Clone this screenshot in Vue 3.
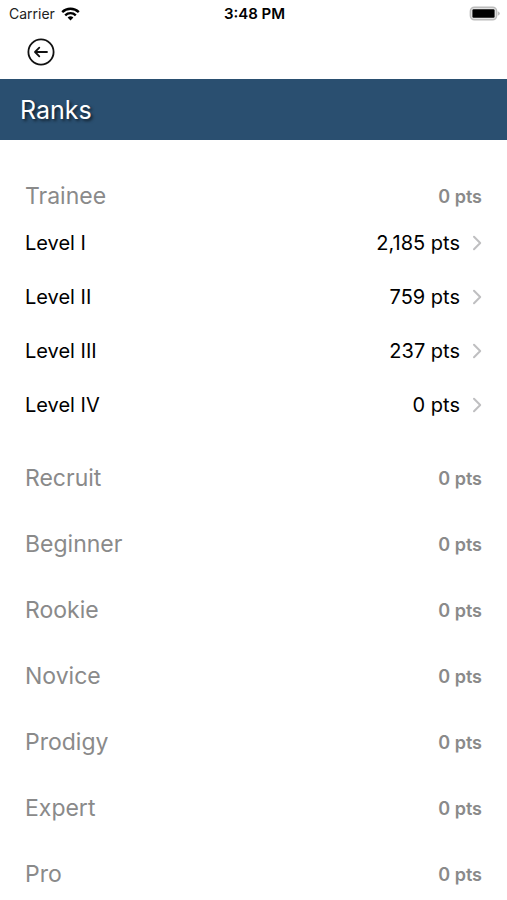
<script setup>
const levels = [
  { name: 'Level I', points: '2,185 pts' },
  { name: 'Level II', points: '759 pts' },
  { name: 'Level III', points: '237 pts' },
  { name: 'Level IV', points: '0 pts' },
]
const ranks = [
  { name: 'Trainee', points: '0 pts', levels },
  ...['Recruit', 'Beginner', 'Rookie', 'Novice', 'Prodigy', 'Expert', 'Pro'].map((name) => ({
    name,
    points: '0 pts',
    levels: [],
  })),
]
</script>

<template>
  <div class="screen">
    <div class="status">
      <div class="carrier">
        <span>Carrier</span>
        <svg width="19" height="14" viewBox="0 0 19 14" aria-hidden="true">
          <g fill="none" stroke="#000" stroke-width="2.4">
            <path d="M1.2 5.1a11.9 11.9 0 0 1 16.6 0" />
            <path d="M4.2 8.3a7.6 7.6 0 0 1 10.6 0" />
          </g>
          <path d="M6.6 10.6a4.2 4.2 0 0 1 5.8 0L9.5 13.5z" />
        </svg>
      </div>
      <span class="time">3:48 PM</span>
      <svg class="battery" width="31" height="15" viewBox="0 0 31 15" aria-hidden="true">
        <rect x="1.4" y="1.2" width="26.2" height="12.6" rx="4" fill="#e4e4e4" stroke="#bcbcbc" stroke-width="1.5" />
        <rect x="3.4" y="3.2" width="22.2" height="8.6" rx="1.2" />
        <path d="M28.8 5.3q2 .7 2 2.2t-2 2.2z" fill="#bcbcbc" />
      </svg>
    </div>
    <nav class="nav">
      <button class="back" type="button" aria-label="Back">
        <svg width="28" height="28" viewBox="0 0 28 28" fill="none" stroke="#111" stroke-width="1.8" aria-hidden="true">
          <circle cx="14" cy="14" r="12.6" />
          <path d="M20 14H8.5M12.3 9.7 8 14l4.3 4.3" stroke-linecap="round" stroke-linejoin="round" />
        </svg>
      </button>
    </nav>
    <h1 class="title">Ranks</h1>
    <main class="list">
      <section v-for="rank in ranks" :key="rank.name" class="rank">
        <div class="rank-head">
          <h2>{{ rank.name }}</h2>
          <span>{{ rank.points }}</span>
        </div>
        <ul v-if="rank.levels.length" class="levels">
          <li v-for="level in rank.levels" :key="level.name">
            <button class="level" type="button">
              <span>{{ level.name }}</span>
              <span class="points">{{ level.points }}</span>
              <svg width="10" height="16" viewBox="0 0 10 16" fill="none" stroke="#bfbfc1" stroke-width="2" aria-hidden="true">
                <path d="M2 1.8 8.2 8 2 14.2" stroke-linecap="round" stroke-linejoin="round" />
              </svg>
            </button>
          </li>
        </ul>
      </section>
    </main>
  </div>
</template>

<style>
body {
  margin: 0;
  background: #fff;
}
</style>

<style scoped>
.screen {
  font-family: Inter, "Liberation Sans", sans-serif;
  color: #000;
}
.status {
  display: grid;
  grid-template-columns: 1fr auto 1fr;
  align-items: center;
  height: 27px;
  padding: 0 7px 0 9px;
  font-size: 14px;
}
.carrier {
  display: flex;
  align-items: center;
  gap: 6px;
  color: #222;
}
.time {
  font-size: 15px;
  font-weight: 600;
}
.battery {
  justify-self: end;
}
.nav {
  display: flex;
  align-items: center;
  height: 50px;
  padding: 0 27px 2px;
}
.back {
  display: flex;
  padding: 0;
  border: 0;
  background: none;
}
.title {
  margin: 0;
  padding: 2px 20px 0;
  background: #2a4f70;
  color: #fff;
  font-size: 25px;
  font-weight: 400;
  line-height: 59px;
  text-shadow: 2px 2px 3px rgba(0, 0, 0, 0.6);
}
.list {
  padding: 23px 25px 0;
}
.rank {
  padding: 13px 0;
}
.rank-head {
  display: flex;
  align-items: center;
  justify-content: space-between;
  height: 40px;
  color: #8a8a8a;
  font-size: 18px;
  font-weight: 600;
}
.rank-head h2 {
  margin: 0;
  font-size: 23px;
  font-weight: 400;
}
.levels {
  margin: 0;
  padding: 0;
  list-style: none;
}
.level {
  display: flex;
  align-items: center;
  width: 100%;
  height: 54px;
  padding: 0;
  border: 0;
  background: none;
  color: #000;
  font: inherit;
  font-size: 20px;
}
.points {
  margin-left: auto;
  margin-right: 12px;
}
</style>
